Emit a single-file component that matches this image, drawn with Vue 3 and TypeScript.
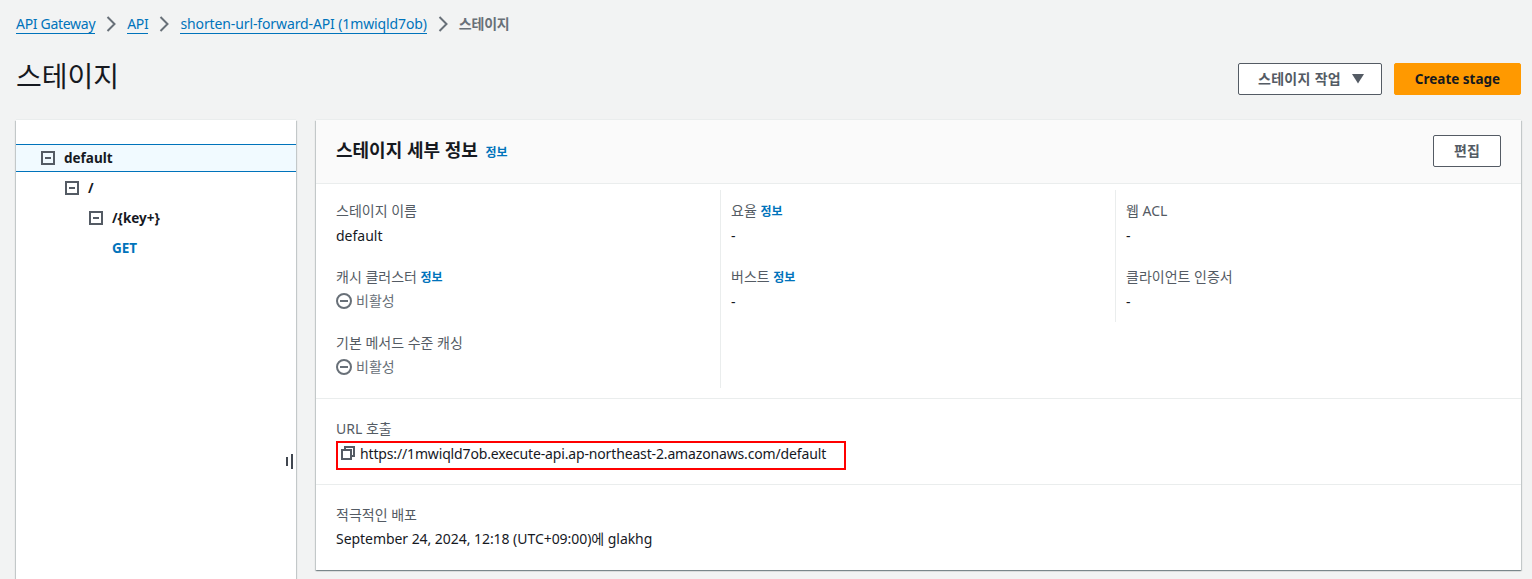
<template>
  <div class="page">
    <nav class="crumbs">
      <template v-for="crumb in crumbs" :key="crumb">
        <a class="crumb-link">{{ crumb }}</a>
        <svg class="crumb-sep" viewBox="0 0 16 16"><path d="M4.5 1l7 7-7 7" /></svg>
      </template>
      <span class="crumb-current">스테이지</span>
    </nav>

    <header class="page-header">
      <h1 class="page-title">스테이지</h1>
      <div class="actions">
        <button class="btn btn-normal btn-menu">
          스테이지 작업
          <svg class="caret" viewBox="0 0 12 10"><path d="M0 0h12L6 9.5z" /></svg>
        </button>
        <button class="btn btn-primary">Create stage</button>
      </div>
    </header>

    <main class="content">
      <aside class="tree-panel">
        <div class="tree-spacer"></div>
        <div
          v-for="node in tree"
          :key="node.label"
          class="tree-row"
          :class="{ selected: node.selected, method: node.method }"
          :style="{ paddingLeft: node.indent + 'px' }"
        >
          <span v-if="!node.method" class="tree-toggle"><i></i></span>
          <span>{{ node.label }}</span>
        </div>
        <span class="resize-handle"><i></i><i></i></span>
      </aside>

      <section class="detail-panel">
        <div class="detail-head">
          <h2 class="detail-title">스테이지 세부 정보 <a class="info title-info">정보</a></h2>
          <button class="btn btn-normal btn-edit">편집</button>
        </div>

        <div class="detail-grid">
          <div class="col col-first">
            <div class="field">
              <div class="label">스테이지 이름</div>
              <div class="value">default</div>
            </div>
            <div class="field">
              <div class="label">캐시 클러스터 <a class="info">정보</a></div>
              <div class="status"><span class="status-icon"><i></i></span>비활성</div>
            </div>
            <div class="field">
              <div class="label">기본 메서드 수준 캐싱</div>
              <div class="status"><span class="status-icon"><i></i></span>비활성</div>
            </div>
          </div>
          <div class="col">
            <div class="field">
              <div class="label">요율 <a class="info">정보</a></div>
              <div class="value">-</div>
            </div>
            <div class="field">
              <div class="label">버스트 <a class="info">정보</a></div>
              <div class="value">-</div>
            </div>
          </div>
          <div class="col col-last">
            <div class="field">
              <div class="label">웹 ACL</div>
              <div class="value">-</div>
            </div>
            <div class="field">
              <div class="label">클라이언트 인증서</div>
              <div class="value">-</div>
            </div>
          </div>
        </div>

        <div class="url-block">
          <div class="label">URL 호출</div>
          <div class="url-box">
            <svg class="copy-icon" viewBox="0 0 14 14">
              <rect x="1" y="4" width="9" height="9" />
              <path d="M4 4V1h9v9h-3" />
            </svg>
            <span class="url-text">https://1mwiqld7ob.execute-api.ap-northeast-2.amazonaws.com/default</span>
          </div>
        </div>

        <div class="deploy-block">
          <div class="label">적극적인 배포</div>
          <div class="date">September 24, 2024, 12:18 (UTC+09:00)에 glakhg</div>
        </div>
      </section>
    </main>
  </div>
</template>

<script setup lang="ts">
interface TreeNode {
  label: string
  indent: number
  selected?: boolean
  method?: boolean
}

const crumbs: string[] = ['API Gateway', 'API', 'shorten-url-forward-API (1mwiqld7ob)']

const tree: TreeNode[] = [
  { label: 'default', indent: 25, selected: true },
  { label: '/', indent: 49 },
  { label: '/{key+}', indent: 73 },
  { label: 'GET', indent: 96, method: true },
]
</script>

<style>
html,
body {
  margin: 0;
  background: #f2f3f3;
  overflow: hidden;
}
</style>

<style scoped>
* {
  box-sizing: border-box;
}

.page {
  height: 579px;
  overflow: hidden;
  padding: 14px 11px 0 16px;
  background: #f2f3f3;
  font-family: "Noto Sans", "Noto Sans CJK KR", sans-serif;
  font-size: 14px;
  line-height: 20px;
  color: #16191f;
}

.crumbs {
  display: flex;
  align-items: center;
  height: 20px;
}

.crumb-link {
  color: #0073bb;
  border-bottom: 1px solid #0073bb;
  line-height: 18px;
  letter-spacing: -0.12px;
}

.crumb-link:nth-of-type(1),
.crumb-link:nth-of-type(2) {
  letter-spacing: -0.3px;
}

.crumb-sep {
  width: 16px;
  height: 16px;
  margin: 0 8px;
  fill: none;
  stroke: #687078;
  stroke-width: 2;
}

.crumb-current {
  color: #687078;
  font-weight: 700;
  letter-spacing: -0.2px;
}

.page-header {
  display: flex;
  justify-content: space-between;
  margin-top: 20px;
  height: 66px;
}

.page-title {
  margin: 0;
  font-size: 28px;
  line-height: 44px;
  font-weight: 400;
}

.actions {
  display: flex;
  gap: 12px;
  padding-top: 9px;
}

.btn {
  height: 32px;
  border-radius: 2px;
  font-family: inherit;
  font-size: 14px;
  line-height: 20px;
  font-weight: 700;
  padding: 0;
}

.btn-normal {
  background: #ffffff;
  border: 1px solid #545b64;
  color: #545b64;
}

.btn-menu {
  width: 144px;
  display: flex;
  align-items: center;
  justify-content: center;
  gap: 11px;
  padding-left: 2px;
  letter-spacing: 0.3px;
}

.caret {
  width: 12px;
  height: 10px;
  fill: #545b64;
}

.btn-primary {
  width: 127px;
  background: #ff9900;
  border: 1px solid #ff9900;
  color: #16191f;
  font-size: 13.5px;
}

.content {
  display: flex;
  gap: 20px;
  align-items: flex-start;
}

.tree-panel {
  position: relative;
  width: 280px;
  height: 480px;
  flex: none;
  background: #ffffff;
  box-shadow: 0 -1px 0 0 #eaeded, 0 1px 1px 0 rgba(0, 28, 36, 0.3), 1px 1px 1px 0 rgba(0, 28, 36, 0.15), -1px 1px 1px 0 rgba(0, 28, 36, 0.15);
}

.tree-spacer {
  height: 24px;
}

.tree-row {
  display: flex;
  align-items: center;
  gap: 9px;
  height: 30px;
  font-weight: 700;
  font-size: 13.5px;
}

.tree-row.selected {
  height: 28px;
  margin-bottom: 1px;
  background: #f1faff;
  border-top: 1px solid #0073bb;
  border-bottom: 1px solid #0073bb;
}

.tree-row.method {
  color: #0073bb;
}

.tree-toggle {
  width: 14px;
  height: 14px;
  flex: none;
  border: 2px solid #545b64;
  display: flex;
  align-items: center;
  justify-content: center;
}

.tree-toggle i {
  width: 6px;
  height: 2px;
  background: #545b64;
}

.resize-handle {
  position: absolute;
  right: 3px;
  top: 334px;
  display: flex;
  align-items: center;
  gap: 3px;
}

.resize-handle i {
  display: block;
  width: 2px;
  height: 9px;
  background: #414750;
}

.resize-handle i:last-child {
  height: 15px;
}

.detail-panel {
  flex: 1;
  height: 450px;
  background: #ffffff;
  box-shadow: 0 -1px 0 0 #eaeded, 0 1px 1px 0 rgba(0, 28, 36, 0.3), 1px 1px 1px 0 rgba(0, 28, 36, 0.15), -1px 1px 1px 0 rgba(0, 28, 36, 0.15);
}

.detail-head {
  display: flex;
  align-items: center;
  justify-content: space-between;
  height: 64px;
  padding: 0 20px;
  background: #fafafa;
  border-bottom: 1px solid #eaeded;
}

.detail-title {
  margin: 0;
  font-size: 18px;
  line-height: 22px;
  font-weight: 700;
}

.title-info {
  margin-left: 3px;
}

.btn-edit {
  width: 68px;
  margin-bottom: 2px;
}

.info {
  font-size: 12px;
  font-weight: 700;
  color: #0073bb;
}

.detail-grid {
  display: grid;
  grid-template-columns: 404px 395px 1fr;
  align-items: start;
  padding-top: 6px;
  border-bottom: 1px solid #eaeded;
  height: 215px;
}

.col {
  height: 198px;
  padding: 11px 20px 0 10px;
  border-left: 1px solid #eaeded;
}

.col-first {
  padding-left: 20px;
  border-left: 0;
}

.col-last {
  height: 132px;
}

.field {
  height: 66px;
}

.label {
  color: #545b64;
  height: 22px;
}

.value {
  height: 24px;
  margin-top: 1px;
  line-height: 24px;
}

.status {
  display: flex;
  align-items: center;
  gap: 4px;
  height: 24px;
  color: #687078;
}

.status-icon {
  width: 16px;
  height: 16px;
  border: 2px solid #687078;
  border-radius: 50%;
  display: flex;
  align-items: center;
  justify-content: center;
}

.status-icon i {
  width: 8px;
  height: 2px;
  background: #687078;
}

.url-block {
  height: 86px;
  padding: 20px 20px 0;
  border-bottom: 1px solid #eaeded;
}

.url-box {
  display: flex;
  align-items: flex-start;
  gap: 5px;
  width: 510px;
  height: 29px;
  padding: 1px 0 0 3px;
  border: 2px solid #ff0000;
}

.url-text {
  letter-spacing: -0.15px;
}

.copy-icon {
  width: 14px;
  height: 14px;
  margin-top: 2px;
  flex: none;
  fill: none;
  stroke: #545b64;
  stroke-width: 2;
}

.deploy-block {
  padding: 20px 20px 0;
}

.date {
  height: 24px;
  line-height: 24px;
  letter-spacing: -0.05px;
}
</style>
